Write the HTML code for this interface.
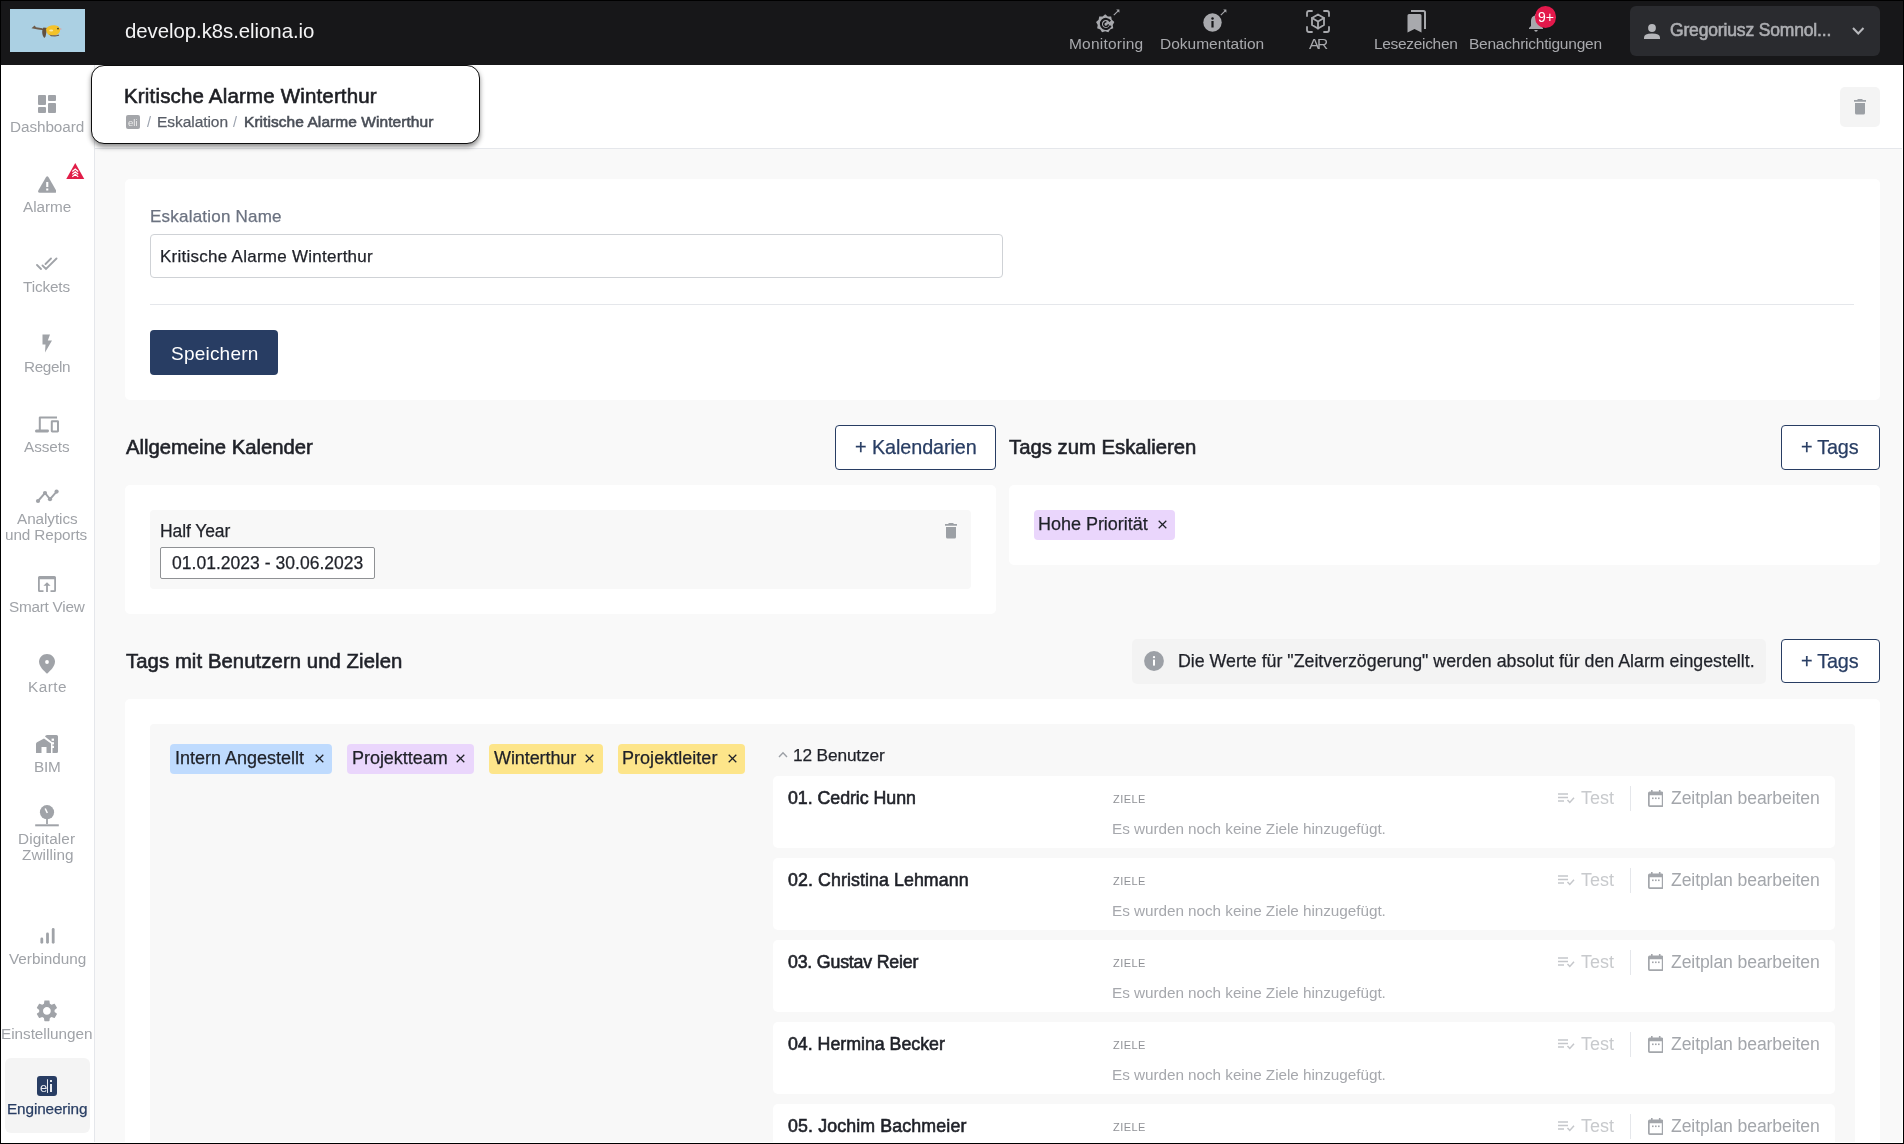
<!DOCTYPE html>
<html><head><meta charset="utf-8"><title>Eskalation</title>
<style>
html,body{margin:0;padding:0;width:1904px;height:1144px;overflow:hidden;background:#fff;}
body{position:relative;font-family:"Liberation Sans", sans-serif;}
svg{display:block}
</style></head><body>
<div style="position:absolute;left:0px;top:0px;width:1904px;height:65px;background:#171719"></div><div style="position:absolute;left:1px;top:65px;width:93px;height:1078px;background:#fff"></div><div style="position:absolute;left:94px;top:65px;width:1px;height:1078px;background:#e5e7eb"></div><div style="position:absolute;left:95px;top:65px;width:1807px;height:83px;background:#fff"></div><div style="position:absolute;left:95px;top:148px;width:1807px;height:1px;background:#e5e7eb"></div><div style="position:absolute;left:95px;top:149px;width:1807px;height:993px;background:#f9f9f9"></div><div style="position:absolute;left:10px;top:9px;width:75px;height:43px;background:#abd0e3"></div><svg style="position:absolute;left:30px;top:23px" width="34" height="17" viewBox="0 0 34 17">
<path d="M1.5 5.2 L4.6 2.6 L6 4.2 L12.5 5.2 L13.5 7.2 L8 6.6 Z" fill="#6e5b4a"/>
<path d="M13.5 4.6 C11.8 7 11.6 11.5 14.2 15 L15.6 13.6 C16.2 10 16.8 7 17.5 5 Z" fill="#62503f"/>
<path d="M16 6 C17 3.4 20.5 2 24.5 2.2 C28.2 2.4 30.2 4.6 30 7.4 C29.6 10.6 26.5 12.6 22 12.6 C18.4 12.6 16.4 10.4 16 6 Z" fill="#f3c22a"/>
<path d="M18.5 10.8 C20.5 12.6 25.5 12.8 28.6 11.4 L29.2 12.8 L25 13.4 L21 13.2 Z" fill="#6e5b4a"/>
<ellipse cx="21.2" cy="7.4" rx="2" ry="1" fill="#f9e7a6"/>
<circle cx="28" cy="5.6" r="0.9" fill="#3b3520"/>
<path d="M30 5.2 L32 6 L30.2 6.8 Z" fill="#e79a8e"/>
</svg><div style="position:absolute;left:125.00px;top:20.00px;font-size:20.4px;line-height:normal;will-change:transform;font-weight:400;color:#f4f4f5;letter-spacing:-0.055px;white-space:nowrap;">develop.k8s.eliona.io</div><div style="position:absolute;left:1069.40px;top:35.00px;font-size:15.5px;line-height:normal;will-change:transform;font-weight:400;color:#a8a9ad;letter-spacing:0.206px;white-space:nowrap;">Monitoring</div><div style="position:absolute;left:1160.00px;top:35.00px;font-size:15.5px;line-height:normal;will-change:transform;font-weight:400;color:#a8a9ad;letter-spacing:-0.003px;white-space:nowrap;">Dokumentation</div><div style="position:absolute;left:1309.00px;top:35.00px;font-size:15.5px;line-height:normal;will-change:transform;font-weight:400;color:#a8a9ad;letter-spacing:-2.438px;white-space:nowrap;">AR</div><div style="position:absolute;left:1373.60px;top:35.00px;font-size:15.5px;line-height:normal;will-change:transform;font-weight:400;color:#a8a9ad;letter-spacing:-0.322px;white-space:nowrap;">Lesezeichen</div><div style="position:absolute;left:1469.00px;top:35.00px;font-size:15.5px;line-height:normal;will-change:transform;font-weight:400;color:#a8a9ad;letter-spacing:-0.235px;white-space:nowrap;">Benachrichtigungen</div><svg style="position:absolute;left:1095.5px;top:12.5px" width="20" height="21" viewBox="0 0 20 21">
<path fill="#a8a9ad" d="M9.20 1.30 L11.80 3.46 L15.18 3.48 L15.78 6.80 L18.36 8.99 L16.68 11.92 L17.25 15.25 L14.09 16.42 L12.38 19.34 L9.20 18.20 L6.02 19.34 L4.31 16.42 L1.15 15.25 L1.72 11.92 L0.04 8.99 L2.62 6.80 L3.22 3.48 L6.60 3.46 Z"/>
<path fill="none" stroke="#171719" stroke-width="2.1" d="M14.2 8.4 A5 5 0 1 0 14.6 12.6"/>
<path fill="none" stroke="#171719" stroke-width="1.5" d="M12.3 11.2 A2.3 2.3 0 1 1 10.4 8.9"/>
</svg><svg style="position:absolute;left:1113px;top:9px" width="7" height="7" viewBox="0 0 7 7"><path d="M0.8 6.2 L5.2 1.8" stroke="#a8a9ad" stroke-width="1.1" fill="none"/><path d="M3.2 0.6 H6.4 V3.8 Z" fill="#a8a9ad"/></svg><svg style="position:absolute;left:1220px;top:9px" width="7" height="7" viewBox="0 0 7 7"><path d="M0.8 6.2 L5.2 1.8" stroke="#a8a9ad" stroke-width="1.1" fill="none"/><path d="M3.2 0.6 H6.4 V3.8 Z" fill="#a8a9ad"/></svg><svg style="position:absolute;left:1203px;top:12.5px" width="19" height="19" viewBox="0 0 19 19">
<circle cx="9.5" cy="9.5" r="9.2" fill="#a8a9ad"/><rect x="8.4" y="8" width="2.2" height="6.5" fill="#171719"/><circle cx="9.5" cy="5.5" r="1.25" fill="#171719"/></svg><svg style="position:absolute;left:1306px;top:9.5px" width="24" height="23" viewBox="0 0 24 23">
<g fill="none" stroke="#a8a9ad" stroke-width="1.8" stroke-linecap="round">
<path d="M1 6 V3 Q1 1 3 1 H6"/><path d="M18 1 H21 Q23 1 23 3 V6"/><path d="M23 17 V20 Q23 22 21 22 H18"/><path d="M6 22 H3 Q1 22 1 20 V17"/>
<path d="M12 4.5 L18 8 V15 L12 18.5 L6 15 V8 Z" stroke-linejoin="round"/><path d="M6 8 L12 11.5 L18 8 M12 11.5 V18.5" stroke-linejoin="round"/>
</g></svg><svg style="position:absolute;left:1406.5px;top:9.5px" width="19" height="23" viewBox="0 0 19 23">
<path fill="#a8a9ad" d="M0.5 5.5 Q0.5 4 2 4 H13 Q14.5 4 14.5 5.5 V22.5 L7.5 19 L0.5 22.5 Z"/>
<path fill="none" stroke="#a8a9ad" stroke-width="2" d="M4 1 H16.5 Q18 1 18 2.5 V19"/></svg><svg style="position:absolute;left:1527px;top:13px" width="20" height="19" viewBox="0 0 20 19">
<path fill="#a8a9ad" d="M9 1 Q10 1 10 2 V2.6 Q14 3.6 14 8 V13 L16 15 V16 H2 V15 L4 13 V8 Q4 3.6 8 2.6 V2 Q8 1 9 1Z"/><path fill="#a8a9ad" d="M7.2 17 H10.8 Q10.5 18.8 9 18.8 Q7.5 18.8 7.2 17Z"/></svg><div style="position:absolute;left:1535px;top:6.3px;width:21.4px;height:21.4px;background:#e3194b;border-radius:50%"></div><div style="position:absolute;left:1537.81px;top:9.00px;font-size:14px;line-height:normal;will-change:transform;font-weight:400;color:#ffffff;letter-spacing:0.000px;white-space:nowrap;">9+</div><div style="position:absolute;left:1630px;top:6px;width:250px;height:49.5px;background:#2a2b2f;border-radius:6px"></div><svg style="position:absolute;left:1644px;top:23.5px" width="16" height="15.5" viewBox="0 0 16 15.5">
<circle cx="8" cy="4" r="3.9" fill="#b5b6ba"/><path fill="#b5b6ba" d="M0 13.5 Q0 9.5 8 9.5 Q16 9.5 16 13.5 V15.5 H0Z"/></svg><div style="position:absolute;left:1669.50px;top:20.00px;font-size:17.5px;line-height:normal;will-change:transform;font-weight:400;-webkit-text-stroke:0.6px #adaeb2;color:#adaeb2;letter-spacing:-0.158px;white-space:nowrap;">Gregoriusz Somnol...</div><svg style="position:absolute;left:1852px;top:26.5px" width="12.5" height="8" viewBox="0 0 12.5 8"><path d="M1 1 L6.25 6.5 L11.5 1" stroke="#b8b9bd" stroke-width="2" fill="none"/></svg><div style="position:absolute;left:9.85px;top:118.00px;font-size:15.3px;line-height:normal;will-change:transform;font-weight:400;color:#a0a3a8;letter-spacing:-0.078px;white-space:nowrap;">Dashboard</div><div style="position:absolute;left:23.30px;top:198.00px;font-size:15.3px;line-height:normal;will-change:transform;font-weight:400;color:#a0a3a8;letter-spacing:-0.029px;white-space:nowrap;">Alarme</div><div style="position:absolute;left:23.45px;top:278.00px;font-size:15.3px;line-height:normal;will-change:transform;font-weight:400;color:#a0a3a8;letter-spacing:-0.121px;white-space:nowrap;">Tickets</div><div style="position:absolute;left:23.70px;top:358.00px;font-size:15.3px;line-height:normal;will-change:transform;font-weight:400;color:#a0a3a8;letter-spacing:-0.394px;white-space:nowrap;">Regeln</div><div style="position:absolute;left:24.20px;top:438.00px;font-size:15.3px;line-height:normal;will-change:transform;font-weight:400;color:#a0a3a8;letter-spacing:-0.051px;white-space:nowrap;">Assets</div><div style="position:absolute;left:16.70px;top:510.00px;font-size:15.3px;line-height:normal;will-change:transform;font-weight:400;color:#a0a3a8;letter-spacing:-0.070px;white-space:nowrap;">Analytics</div><div style="position:absolute;left:5.40px;top:526.00px;font-size:15.3px;line-height:normal;will-change:transform;font-weight:400;color:#a0a3a8;letter-spacing:-0.109px;white-space:nowrap;">und Reports</div><div style="position:absolute;left:8.85px;top:598.00px;font-size:15.3px;line-height:normal;will-change:transform;font-weight:400;color:#a0a3a8;letter-spacing:-0.242px;white-space:nowrap;">Smart View</div><div style="position:absolute;left:27.70px;top:678.00px;font-size:15.3px;line-height:normal;will-change:transform;font-weight:400;color:#a0a3a8;letter-spacing:0.486px;white-space:nowrap;">Karte</div><div style="position:absolute;left:33.70px;top:758.00px;font-size:15.3px;line-height:normal;will-change:transform;font-weight:400;color:#a0a3a8;letter-spacing:-0.226px;white-space:nowrap;">BIM</div><div style="position:absolute;left:18.20px;top:830.00px;font-size:15.3px;line-height:normal;will-change:transform;font-weight:400;color:#a0a3a8;letter-spacing:0.123px;white-space:nowrap;">Digitaler</div><div style="position:absolute;left:21.70px;top:846.00px;font-size:15.3px;line-height:normal;will-change:transform;font-weight:400;color:#a0a3a8;letter-spacing:0.073px;white-space:nowrap;">Zwilling</div><div style="position:absolute;left:8.85px;top:950.00px;font-size:15.3px;line-height:normal;will-change:transform;font-weight:400;color:#a0a3a8;letter-spacing:-0.022px;white-space:nowrap;">Verbindung</div><div style="position:absolute;left:1.20px;top:1025.00px;font-size:15.3px;line-height:normal;will-change:transform;font-weight:400;color:#a0a3a8;letter-spacing:-0.028px;white-space:nowrap;">Einstellungen</div><div style="position:absolute;left:5px;top:1058px;width:85px;height:75px;background:#f4f4f4;border-radius:6px"></div><div style="position:absolute;left:6.70px;top:1100.00px;font-size:15.3px;line-height:normal;will-change:transform;font-weight:400;-webkit-text-stroke:0.25px #283d63;color:#283d63;letter-spacing:-0.114px;white-space:nowrap;">Engineering</div><svg style="position:absolute;left:38px;top:95px" width="18" height="18" viewBox="0 0 18 18" fill="#a0a3a8">
<rect x="0" y="0" width="8" height="10" rx="1"/><rect x="0" y="12" width="8" height="6" rx="1"/><rect x="10" y="0" width="8" height="6" rx="1"/><rect x="10" y="8" width="8" height="10" rx="1"/></svg><svg style="position:absolute;left:37.8px;top:176px" width="18.5" height="17" viewBox="0 0 18.5 17">
<path fill="#a0a3a8" d="M8.1 1 Q9.25 -0.6 10.4 1 L18.2 14.6 Q18.9 16.8 16.8 16.8 H1.7 Q-0.4 16.8 0.3 14.6 Z"/><rect x="8.2" y="6" width="2.1" height="5" fill="#fff"/><rect x="8.2" y="12.5" width="2.1" height="2" fill="#fff"/></svg><svg style="position:absolute;left:66px;top:162.8px" width="18.5" height="16.5" viewBox="0 0 18.5 16.5">
<path fill="#e11d48" d="M9.25 0 L18.5 16.5 H0 Z"/><path d="M6.3 8.5 L9.25 6 L12.2 8.5 M6.3 11.2 L9.25 8.7 L12.2 11.2 M6.3 13.9 L9.25 11.4 L12.2 13.9" stroke="#fff" stroke-width="1.2" fill="none"/></svg><svg style="position:absolute;left:36px;top:257px" width="22" height="14" viewBox="0 0 22 14">
<path d="M1 8 L5 12 M6.5 8.5 L10 12 L20.5 1.5 M9.5 7 L15 1.5" stroke="#a0a3a8" stroke-width="1.8" fill="none" stroke-linecap="round"/></svg><svg style="position:absolute;left:41px;top:334px" width="12" height="19" viewBox="0 0 12 19">
<path fill="#a0a3a8" d="M1.5 0.5 H9 L6.8 6.5 H11 L4 18.5 L4.5 10.5 H1.5 Z"/></svg><svg style="position:absolute;left:35px;top:415.5px" width="24" height="17" viewBox="0 0 24 17">
<path fill="#a0a3a8" d="M3.8 1.6 Q3.8 0.4 5 0.4 H22 V2.4 H5.8 V13.4 H12.6 Q14 13.4 14 14.8 Q14 16.4 12.6 16.4 H1.4 Q0 16.4 0 14.9 Q0 13.4 1.4 13.4 H3.8 Z"/>
<path fill="#a0a3a8" d="M17.2 4.2 H22.6 Q24 4.2 24 5.6 V15 Q24 16.4 22.6 16.4 H17.2 Q15.8 16.4 15.8 15 V5.6 Q15.8 4.2 17.2 4.2 Z M17.8 6.2 V14.4 H22 V6.2 Z"/></svg><svg style="position:absolute;left:35px;top:489px" width="24" height="15" viewBox="0 0 24 15">
<path d="M3 12 L10 4 L15 10.2 L21.6 2.6" stroke="#a0a3a8" stroke-width="1.9" fill="none"/>
<circle cx="3" cy="12" r="2.1" fill="#a0a3a8"/><circle cx="10" cy="4" r="2.1" fill="#a0a3a8"/><circle cx="15" cy="10.2" r="2.1" fill="#a0a3a8"/><circle cx="21.6" cy="2.6" r="2.1" fill="#a0a3a8"/></svg><svg style="position:absolute;left:38px;top:576px" width="18" height="16" viewBox="0 0 18 16">
<path fill="#a0a3a8" d="M1.5 0 H16.5 Q18 0 18 1.5 V14.5 Q18 16 16.5 16 H12.5 V14.2 H16.2 V3.2 H1.8 V14.2 H5.5 V16 H1.5 Q0 16 0 14.5 V1.5 Q0 0 1.5 0Z"/>
<path fill="#a0a3a8" d="M9 6.2 L12.6 9.8 H9.9 V16 H8.1 V9.8 H5.4 Z"/></svg><svg style="position:absolute;left:39px;top:654px" width="16" height="20" viewBox="0 0 16 20">
<path fill="#a0a3a8" d="M8 0 C12.4 0 16 3.4 16 7.8 C16 12 11.6 16.6 8 19.8 C4.4 16.6 0 12 0 7.8 C0 3.4 3.6 0 8 0Z"/><circle cx="8" cy="8" r="1.9" fill="#fff"/></svg><svg style="position:absolute;left:36px;top:735px" width="22" height="18" viewBox="0 0 22 18">
<path fill="#a0a3a8" d="M8 3.5 L15 8.5 V18 H10.5 V12 H5.5 V18 H0 V9 Q0 8 1 7.3 Z"/>
<path fill="#a0a3a8" d="M9 1.5 Q9.5 0 11 0 H20.5 Q22 0 22 1.5 V16.5 Q22 18 20.5 18 H16.5 V7.5 Z"/>
<rect x="15.6" y="3.6" width="2.4" height="2.2" fill="#fff"/><rect x="15.6" y="7.2" width="2.4" height="2.2" fill="#fff"/><rect x="15.6" y="10.8" width="2.4" height="2.2" fill="#fff"/></svg><svg style="position:absolute;left:35px;top:805px" width="24" height="22" viewBox="0 0 24 22">
<circle cx="12" cy="7.2" r="7.1" fill="#a0a3a8"/><path d="M10.2 3.5 L12.3 8" stroke="#fff" stroke-width="1.5"/>
<rect x="11.1" y="14" width="1.8" height="5" fill="#a0a3a8"/><rect x="0.2" y="19.3" width="23.6" height="2" fill="#a0a3a8"/></svg><svg style="position:absolute;left:40px;top:928px" width="15" height="16" viewBox="0 0 15 16">
<g stroke="#a0a3a8" stroke-width="2.8" stroke-linecap="round"><path d="M1.8 11 V14.3"/><path d="M7.5 6 V14.3"/><path d="M13.2 1.5 V14.3"/></g></svg><svg style="position:absolute;left:34.3px;top:998.4px" width="25.8" height="25.8" viewBox="0 0 24 24">
<path fill="#a0a3a8" d="M19.14 12.94c.04-.3.06-.61.06-.94 0-.32-.02-.64-.07-.94l2.03-1.58c.18-.14.23-.41.12-.61l-1.92-3.32c-.12-.22-.37-.29-.59-.22l-2.39.96c-.5-.38-1.03-.7-1.62-.94l-.36-2.54c-.04-.24-.24-.41-.48-.41h-3.84c-.24 0-.43.17-.47.41l-.36 2.54c-.59.24-1.13.57-1.62.94l-2.39-.96c-.22-.08-.47 0-.59.22L2.74 8.87c-.12.21-.08.47.12.61l2.03 1.58c-.05.3-.09.63-.09.94s.02.64.07.94l-2.03 1.58c-.18.14-.23.41-.12.61l1.92 3.32c.12.22.37.29.59.22l2.39-.96c.5.38 1.03.7 1.62.94l.36 2.54c.05.24.24.41.48.41h3.84c.24 0 .44-.17.47-.41l.36-2.54c.59-.24 1.13-.56 1.62-.94l2.39.96c.22.08.47 0 .59-.22l1.92-3.32c.12-.22.07-.47-.12-.61l-2.01-1.58zM12 15.6c-1.98 0-3.6-1.62-3.6-3.6s1.62-3.6 3.6-3.6 3.6 1.62 3.6 3.6-1.62 3.6-3.6 3.6z"/></svg><div style="position:absolute;left:37px;top:1075.7px;width:20px;height:20.3px;background:#283d63;border-radius:3px"></div><div style="position:absolute;left:40.00px;top:1080.00px;font-size:13px;line-height:normal;will-change:transform;font-weight:400;color:#e8ebf0;letter-spacing:0.000px;white-space:nowrap;">e</div><div style="position:absolute;left:47.2px;top:1079px;width:1.3px;height:14px;background:#e8ebf0;border-radius:1px"></div><div style="position:absolute;left:50px;top:1080px;width:1.6px;height:1.6px;background:#e8ebf0"></div><div style="position:absolute;left:50px;top:1083.5px;width:1.6px;height:8px;background:#e8ebf0"></div><div style="position:absolute;left:91px;top:64.5px;width:389px;height:79px;box-sizing:border-box;background:#fff;border:1.6px solid #0d0d0d;border-radius:13px;box-shadow:0 3px 5px rgba(0,0,0,0.45)"></div><div style="position:absolute;left:124.30px;top:84.00px;font-size:20.5px;line-height:normal;will-change:transform;font-weight:400;-webkit-text-stroke:0.6px #1d1e23;color:#1d1e23;letter-spacing:0.167px;white-space:nowrap;">Kritische Alarme Winterthur</div><div style="position:absolute;left:126px;top:115px;width:14px;height:14px;background:#a4a6aa;border-radius:2px"></div><div style="position:absolute;left:128.30px;top:117.00px;font-size:9.5px;line-height:normal;will-change:transform;font-weight:400;color:#eeeeee;letter-spacing:0.000px;white-space:nowrap;">eli</div><div style="position:absolute;left:147.00px;top:114.00px;font-size:14.5px;line-height:normal;will-change:transform;font-weight:400;color:#9ca3af;letter-spacing:0.000px;white-space:nowrap;">/</div><div style="position:absolute;left:156.60px;top:113.00px;font-size:15.5px;line-height:normal;will-change:transform;font-weight:400;-webkit-text-stroke:0.25px #585d66;color:#585d66;letter-spacing:-0.055px;white-space:nowrap;">Eskalation</div><div style="position:absolute;left:233.00px;top:114.00px;font-size:14.5px;line-height:normal;will-change:transform;font-weight:400;color:#9ca3af;letter-spacing:0.000px;white-space:nowrap;">/</div><div style="position:absolute;left:244.00px;top:113.00px;font-size:15.5px;line-height:normal;will-change:transform;font-weight:400;-webkit-text-stroke:0.6px #4a4f58;color:#4a4f58;letter-spacing:0.059px;white-space:nowrap;">Kritische Alarme Winterthur</div><div style="position:absolute;left:1840px;top:87px;width:40px;height:40px;background:#f4f4f4;border-radius:5px"></div><svg style="position:absolute;left:1854px;top:99px" width="12" height="16" viewBox="0 0 12 16"><path fill="#9ca0a5" d="M4 0 H8 L9 1 H12 V2.8 H0 V1 H3 Z"/><path fill="#9ca0a5" d="M1 4 H11 V14 Q11 15.5 9.5 15.5 H2.5 Q1 15.5 1 14 Z"/></svg><div style="position:absolute;left:125px;top:179px;width:1755px;height:221px;background:#fff;border-radius:5px"></div><div style="position:absolute;left:149.70px;top:207.00px;font-size:17px;line-height:normal;will-change:transform;font-weight:400;-webkit-text-stroke:0.25px #6b7280;color:#6b7280;letter-spacing:0.211px;white-space:nowrap;">Eskalation Name</div><div style="position:absolute;left:150px;top:234px;width:853px;height:44px;background:#fff;border:1px solid #cfd2d6;border-radius:4px;box-sizing:border-box"></div><div style="position:absolute;left:159.60px;top:247.00px;font-size:17px;line-height:normal;will-change:transform;font-weight:400;-webkit-text-stroke:0.25px #1f2128;color:#1f2128;letter-spacing:0.260px;white-space:nowrap;">Kritische Alarme Winterthur</div><div style="position:absolute;left:150px;top:304px;width:1704px;height:1px;background:#e5e7eb"></div><div style="position:absolute;left:150px;top:330px;width:128px;height:45px;background:#283d63;border-radius:4px"></div><div style="position:absolute;left:170.70px;top:343.00px;font-size:19px;line-height:normal;will-change:transform;font-weight:400;color:#ffffff;letter-spacing:0.214px;white-space:nowrap;">Speichern</div><div style="position:absolute;left:125.50px;top:436.00px;font-size:20.3px;line-height:normal;will-change:transform;font-weight:400;-webkit-text-stroke:0.6px #1f2128;color:#1f2128;letter-spacing:-0.022px;white-space:nowrap;">Allgemeine Kalender</div><div style="position:absolute;left:835px;top:425px;width:161px;height:45px;background:#fff;border:1px solid #283d63;border-radius:4px;box-sizing:border-box"></div><div style="position:absolute;left:854.70px;top:436.00px;font-size:19.8px;line-height:normal;will-change:transform;font-weight:400;-webkit-text-stroke:0.25px #283d63;color:#283d63;letter-spacing:-0.069px;white-space:nowrap;">+ Kalendarien</div><div style="position:absolute;left:125px;top:485px;width:871px;height:129px;background:#fff;border-radius:5px"></div><div style="position:absolute;left:150px;top:510px;width:821px;height:79px;background:#f8f8f8;border-radius:4px"></div><div style="position:absolute;left:159.70px;top:521.00px;font-size:17.5px;line-height:normal;will-change:transform;font-weight:400;-webkit-text-stroke:0.25px #1f2128;color:#1f2128;letter-spacing:-0.089px;white-space:nowrap;">Half Year</div><div style="position:absolute;left:160px;top:547px;width:215px;height:32px;background:#fff;border:1px solid #8f9194;border-radius:2px;box-sizing:border-box"></div><div style="position:absolute;left:171.80px;top:553.00px;font-size:17.5px;line-height:normal;will-change:transform;font-weight:400;-webkit-text-stroke:0.25px #1f2128;color:#1f2128;letter-spacing:0.028px;white-space:nowrap;">01.01.2023 - 30.06.2023</div><svg style="position:absolute;left:945px;top:523px" width="12" height="16" viewBox="0 0 12 16"><path fill="#9ca0a5" d="M4 0 H8 L9 1 H12 V2.8 H0 V1 H3 Z"/><path fill="#9ca0a5" d="M1 4 H11 V14 Q11 15.5 9.5 15.5 H2.5 Q1 15.5 1 14 Z"/></svg><div style="position:absolute;left:1009.00px;top:436.00px;font-size:20.3px;line-height:normal;will-change:transform;font-weight:400;-webkit-text-stroke:0.6px #1f2128;color:#1f2128;letter-spacing:0.009px;white-space:nowrap;">Tags zum Eskalieren</div><div style="position:absolute;left:1781px;top:425px;width:99px;height:45px;background:#fff;border:1px solid #283d63;border-radius:4px;box-sizing:border-box"></div><div style="position:absolute;left:1800.90px;top:436.00px;font-size:19.8px;line-height:normal;will-change:transform;font-weight:400;-webkit-text-stroke:0.25px #283d63;color:#283d63;letter-spacing:-0.188px;white-space:nowrap;">+ Tags</div><div style="position:absolute;left:1009px;top:485px;width:871px;height:80px;background:#fff;border-radius:5px"></div><div style="position:absolute;left:1034px;top:510px;width:141px;height:30px;background:#ead6fc;border-radius:4px"></div><div style="position:absolute;left:1038.40px;top:514.00px;font-size:18px;line-height:normal;will-change:transform;font-weight:400;-webkit-text-stroke:0.25px #1f2128;color:#1f2128;letter-spacing:-0.027px;white-space:nowrap;">Hohe Priorität</div><svg style="position:absolute;left:1157.5px;top:520px" width="9" height="9" viewBox="0 0 9 9"><path d="M0.7 0.7 L8.3 8.3 M8.3 0.7 L0.7 8.3" stroke="#1f2128" stroke-width="1.25"/></svg><div style="position:absolute;left:125.50px;top:650.00px;font-size:20.3px;line-height:normal;will-change:transform;font-weight:400;-webkit-text-stroke:0.6px #1f2128;color:#1f2128;letter-spacing:0.083px;white-space:nowrap;">Tags mit Benutzern und Zielen</div><div style="position:absolute;left:1132px;top:639px;width:634px;height:45px;background:#f3f3f3;border-radius:5px"></div><svg style="position:absolute;left:1144px;top:651px" width="20" height="20" viewBox="0 0 20 20"><circle cx="10" cy="10" r="9.9" fill="#9ca0a6"/><rect x="9" y="8.6" width="2" height="6" fill="#fff"/><circle cx="10" cy="6.2" r="1.15" fill="#fff"/></svg><div style="position:absolute;left:1178.00px;top:651.00px;font-size:17.8px;line-height:normal;will-change:transform;font-weight:400;-webkit-text-stroke:0.25px #1f2128;color:#1f2128;letter-spacing:-0.001px;white-space:nowrap;">Die Werte für &quot;Zeitverzögerung&quot; werden absolut für den Alarm eingestellt.</div><div style="position:absolute;left:1781px;top:639px;width:99px;height:44px;background:#fff;border:1px solid #283d63;border-radius:4px;box-sizing:border-box"></div><div style="position:absolute;left:1800.90px;top:650.00px;font-size:19.8px;line-height:normal;will-change:transform;font-weight:400;-webkit-text-stroke:0.25px #283d63;color:#283d63;letter-spacing:-0.188px;white-space:nowrap;">+ Tags</div><div style="position:absolute;left:125px;top:699px;width:1755px;height:500px;background:#fff;border-radius:5px"></div><div style="position:absolute;left:150px;top:724px;width:1705px;height:500px;background:#f8f8f8;border-radius:4px"></div><div style="position:absolute;left:170px;top:744px;width:162px;height:30px;background:#bfdbfe;border-radius:4px"></div><div style="position:absolute;left:174.70px;top:748.00px;font-size:18px;line-height:normal;will-change:transform;font-weight:400;-webkit-text-stroke:0.25px #1f2128;color:#1f2128;letter-spacing:-0.005px;white-space:nowrap;">Intern Angestellt</div><svg style="position:absolute;left:314.6px;top:754px" width="9" height="9" viewBox="0 0 9 9"><path d="M0.7 0.7 L8.3 8.3 M8.3 0.7 L0.7 8.3" stroke="#1f2128" stroke-width="1.25"/></svg><div style="position:absolute;left:347px;top:744px;width:127px;height:30px;background:#ead6fc;border-radius:4px"></div><div style="position:absolute;left:351.50px;top:748.00px;font-size:18px;line-height:normal;will-change:transform;font-weight:400;-webkit-text-stroke:0.25px #1f2128;color:#1f2128;letter-spacing:-0.034px;white-space:nowrap;">Projektteam</div><svg style="position:absolute;left:456.4px;top:754px" width="9" height="9" viewBox="0 0 9 9"><path d="M0.7 0.7 L8.3 8.3 M8.3 0.7 L0.7 8.3" stroke="#1f2128" stroke-width="1.25"/></svg><div style="position:absolute;left:489px;top:744px;width:114px;height:30px;background:#fde58a;border-radius:4px"></div><div style="position:absolute;left:494.30px;top:748.00px;font-size:18px;line-height:normal;will-change:transform;font-weight:400;-webkit-text-stroke:0.25px #1f2128;color:#1f2128;letter-spacing:-0.081px;white-space:nowrap;">Winterthur</div><svg style="position:absolute;left:585.4px;top:754px" width="9" height="9" viewBox="0 0 9 9"><path d="M0.7 0.7 L8.3 8.3 M8.3 0.7 L0.7 8.3" stroke="#1f2128" stroke-width="1.25"/></svg><div style="position:absolute;left:618px;top:744px;width:127px;height:30px;background:#fde58a;border-radius:4px"></div><div style="position:absolute;left:622.40px;top:748.00px;font-size:18px;line-height:normal;will-change:transform;font-weight:400;-webkit-text-stroke:0.25px #1f2128;color:#1f2128;letter-spacing:0.030px;white-space:nowrap;">Projektleiter</div><svg style="position:absolute;left:727.5px;top:754px" width="9" height="9" viewBox="0 0 9 9"><path d="M0.7 0.7 L8.3 8.3 M8.3 0.7 L0.7 8.3" stroke="#1f2128" stroke-width="1.25"/></svg><svg style="position:absolute;left:778px;top:751px" width="10" height="7" viewBox="0 0 10 7"><path d="M1 6 L5 1.8 L9 6" stroke="#9ca0a6" stroke-width="1.4" fill="none"/></svg><div style="position:absolute;left:792.70px;top:745.00px;font-size:17.3px;line-height:normal;will-change:transform;font-weight:400;-webkit-text-stroke:0.25px #1f2128;color:#1f2128;letter-spacing:-0.144px;white-space:nowrap;">12 Benutzer</div><div style="position:absolute;left:773px;top:776px;width:1062px;height:72px;background:#fff;border-radius:5px"></div><div style="position:absolute;left:787.70px;top:788.00px;font-size:17.8px;line-height:normal;will-change:transform;font-weight:400;-webkit-text-stroke:0.6px #1f2128;color:#1f2128;letter-spacing:-0.043px;white-space:nowrap;">01. Cedric Hunn</div><div style="position:absolute;left:1112.70px;top:793.00px;font-size:11px;line-height:normal;will-change:transform;font-weight:400;color:#909297;letter-spacing:0.443px;white-space:nowrap;">ZIELE</div><div style="position:absolute;left:1111.70px;top:820.00px;font-size:15.3px;line-height:normal;will-change:transform;font-weight:400;color:#a6a8ad;letter-spacing:-0.044px;white-space:nowrap;">Es wurden noch keine Ziele hinzugefügt.</div><svg style="position:absolute;left:1558px;top:792.5px" width="17" height="11" viewBox="0 0 17 11"><g stroke="#c5c7cb" stroke-width="1.5" fill="none"><path d="M0 1 H10 M0 4.5 H10 M0 8 H6"/><path d="M9.5 7 L11.8 9.5 L16 4.8"/></g></svg><div style="position:absolute;left:1581.00px;top:788.00px;font-size:18px;line-height:normal;will-change:transform;font-weight:400;color:#c8cacd;letter-spacing:-0.004px;white-space:nowrap;">Test</div><div style="position:absolute;left:1629.5px;top:786px;width:1px;height:25px;background:#e5e7eb"></div><svg style="position:absolute;left:1647.5px;top:789.5px" width="15.5" height="17" viewBox="0 0 15.5 17"><path fill="#a3a6ab" d="M3 0 H4.6 V1.6 H10.9 V0 H12.5 V1.6 H13.8 Q15.5 1.6 15.5 3.3 V15.3 Q15.5 17 13.8 17 H1.7 Q0 17 0 15.3 V3.3 Q0 1.6 1.7 1.6 H3 Z M1.7 5.2 V15.3 H13.8 V5.2 Z"/><rect x="4" y="7.5" width="1.6" height="1.6" fill="#a3a6ab"/><rect x="7" y="7.5" width="1.6" height="1.6" fill="#a3a6ab"/><rect x="10" y="7.5" width="1.6" height="1.6" fill="#a3a6ab"/></svg><div style="position:absolute;left:1670.80px;top:788.00px;font-size:17.6px;line-height:normal;will-change:transform;font-weight:400;color:#a3a6ab;letter-spacing:-0.102px;white-space:nowrap;">Zeitplan bearbeiten</div><div style="position:absolute;left:773px;top:858px;width:1062px;height:72px;background:#fff;border-radius:5px"></div><div style="position:absolute;left:787.70px;top:870.00px;font-size:17.8px;line-height:normal;will-change:transform;font-weight:400;-webkit-text-stroke:0.6px #1f2128;color:#1f2128;letter-spacing:0.084px;white-space:nowrap;">02. Christina Lehmann</div><div style="position:absolute;left:1112.70px;top:875.00px;font-size:11px;line-height:normal;will-change:transform;font-weight:400;color:#909297;letter-spacing:0.443px;white-space:nowrap;">ZIELE</div><div style="position:absolute;left:1111.70px;top:902.00px;font-size:15.3px;line-height:normal;will-change:transform;font-weight:400;color:#a6a8ad;letter-spacing:-0.044px;white-space:nowrap;">Es wurden noch keine Ziele hinzugefügt.</div><svg style="position:absolute;left:1558px;top:874.5px" width="17" height="11" viewBox="0 0 17 11"><g stroke="#c5c7cb" stroke-width="1.5" fill="none"><path d="M0 1 H10 M0 4.5 H10 M0 8 H6"/><path d="M9.5 7 L11.8 9.5 L16 4.8"/></g></svg><div style="position:absolute;left:1581.00px;top:870.00px;font-size:18px;line-height:normal;will-change:transform;font-weight:400;color:#c8cacd;letter-spacing:-0.004px;white-space:nowrap;">Test</div><div style="position:absolute;left:1629.5px;top:868px;width:1px;height:25px;background:#e5e7eb"></div><svg style="position:absolute;left:1647.5px;top:871.5px" width="15.5" height="17" viewBox="0 0 15.5 17"><path fill="#a3a6ab" d="M3 0 H4.6 V1.6 H10.9 V0 H12.5 V1.6 H13.8 Q15.5 1.6 15.5 3.3 V15.3 Q15.5 17 13.8 17 H1.7 Q0 17 0 15.3 V3.3 Q0 1.6 1.7 1.6 H3 Z M1.7 5.2 V15.3 H13.8 V5.2 Z"/><rect x="4" y="7.5" width="1.6" height="1.6" fill="#a3a6ab"/><rect x="7" y="7.5" width="1.6" height="1.6" fill="#a3a6ab"/><rect x="10" y="7.5" width="1.6" height="1.6" fill="#a3a6ab"/></svg><div style="position:absolute;left:1670.80px;top:870.00px;font-size:17.6px;line-height:normal;will-change:transform;font-weight:400;color:#a3a6ab;letter-spacing:-0.102px;white-space:nowrap;">Zeitplan bearbeiten</div><div style="position:absolute;left:773px;top:940px;width:1062px;height:72px;background:#fff;border-radius:5px"></div><div style="position:absolute;left:787.70px;top:952.00px;font-size:17.8px;line-height:normal;will-change:transform;font-weight:400;-webkit-text-stroke:0.6px #1f2128;color:#1f2128;letter-spacing:-0.207px;white-space:nowrap;">03. Gustav Reier</div><div style="position:absolute;left:1112.70px;top:957.00px;font-size:11px;line-height:normal;will-change:transform;font-weight:400;color:#909297;letter-spacing:0.443px;white-space:nowrap;">ZIELE</div><div style="position:absolute;left:1111.70px;top:984.00px;font-size:15.3px;line-height:normal;will-change:transform;font-weight:400;color:#a6a8ad;letter-spacing:-0.044px;white-space:nowrap;">Es wurden noch keine Ziele hinzugefügt.</div><svg style="position:absolute;left:1558px;top:956.5px" width="17" height="11" viewBox="0 0 17 11"><g stroke="#c5c7cb" stroke-width="1.5" fill="none"><path d="M0 1 H10 M0 4.5 H10 M0 8 H6"/><path d="M9.5 7 L11.8 9.5 L16 4.8"/></g></svg><div style="position:absolute;left:1581.00px;top:952.00px;font-size:18px;line-height:normal;will-change:transform;font-weight:400;color:#c8cacd;letter-spacing:-0.004px;white-space:nowrap;">Test</div><div style="position:absolute;left:1629.5px;top:950px;width:1px;height:25px;background:#e5e7eb"></div><svg style="position:absolute;left:1647.5px;top:953.5px" width="15.5" height="17" viewBox="0 0 15.5 17"><path fill="#a3a6ab" d="M3 0 H4.6 V1.6 H10.9 V0 H12.5 V1.6 H13.8 Q15.5 1.6 15.5 3.3 V15.3 Q15.5 17 13.8 17 H1.7 Q0 17 0 15.3 V3.3 Q0 1.6 1.7 1.6 H3 Z M1.7 5.2 V15.3 H13.8 V5.2 Z"/><rect x="4" y="7.5" width="1.6" height="1.6" fill="#a3a6ab"/><rect x="7" y="7.5" width="1.6" height="1.6" fill="#a3a6ab"/><rect x="10" y="7.5" width="1.6" height="1.6" fill="#a3a6ab"/></svg><div style="position:absolute;left:1670.80px;top:952.00px;font-size:17.6px;line-height:normal;will-change:transform;font-weight:400;color:#a3a6ab;letter-spacing:-0.102px;white-space:nowrap;">Zeitplan bearbeiten</div><div style="position:absolute;left:773px;top:1022px;width:1062px;height:72px;background:#fff;border-radius:5px"></div><div style="position:absolute;left:787.70px;top:1034.00px;font-size:17.8px;line-height:normal;will-change:transform;font-weight:400;-webkit-text-stroke:0.6px #1f2128;color:#1f2128;letter-spacing:-0.018px;white-space:nowrap;">04. Hermina Becker</div><div style="position:absolute;left:1112.70px;top:1039.00px;font-size:11px;line-height:normal;will-change:transform;font-weight:400;color:#909297;letter-spacing:0.443px;white-space:nowrap;">ZIELE</div><div style="position:absolute;left:1111.70px;top:1066.00px;font-size:15.3px;line-height:normal;will-change:transform;font-weight:400;color:#a6a8ad;letter-spacing:-0.044px;white-space:nowrap;">Es wurden noch keine Ziele hinzugefügt.</div><svg style="position:absolute;left:1558px;top:1038.5px" width="17" height="11" viewBox="0 0 17 11"><g stroke="#c5c7cb" stroke-width="1.5" fill="none"><path d="M0 1 H10 M0 4.5 H10 M0 8 H6"/><path d="M9.5 7 L11.8 9.5 L16 4.8"/></g></svg><div style="position:absolute;left:1581.00px;top:1034.00px;font-size:18px;line-height:normal;will-change:transform;font-weight:400;color:#c8cacd;letter-spacing:-0.004px;white-space:nowrap;">Test</div><div style="position:absolute;left:1629.5px;top:1032px;width:1px;height:25px;background:#e5e7eb"></div><svg style="position:absolute;left:1647.5px;top:1035.5px" width="15.5" height="17" viewBox="0 0 15.5 17"><path fill="#a3a6ab" d="M3 0 H4.6 V1.6 H10.9 V0 H12.5 V1.6 H13.8 Q15.5 1.6 15.5 3.3 V15.3 Q15.5 17 13.8 17 H1.7 Q0 17 0 15.3 V3.3 Q0 1.6 1.7 1.6 H3 Z M1.7 5.2 V15.3 H13.8 V5.2 Z"/><rect x="4" y="7.5" width="1.6" height="1.6" fill="#a3a6ab"/><rect x="7" y="7.5" width="1.6" height="1.6" fill="#a3a6ab"/><rect x="10" y="7.5" width="1.6" height="1.6" fill="#a3a6ab"/></svg><div style="position:absolute;left:1670.80px;top:1034.00px;font-size:17.6px;line-height:normal;will-change:transform;font-weight:400;color:#a3a6ab;letter-spacing:-0.102px;white-space:nowrap;">Zeitplan bearbeiten</div><div style="position:absolute;left:773px;top:1104px;width:1062px;height:72px;background:#fff;border-radius:5px"></div><div style="position:absolute;left:787.70px;top:1116.00px;font-size:17.8px;line-height:normal;will-change:transform;font-weight:400;-webkit-text-stroke:0.6px #1f2128;color:#1f2128;letter-spacing:0.127px;white-space:nowrap;">05. Jochim Bachmeier</div><div style="position:absolute;left:1112.70px;top:1121.00px;font-size:11px;line-height:normal;will-change:transform;font-weight:400;color:#909297;letter-spacing:0.443px;white-space:nowrap;">ZIELE</div><div style="position:absolute;left:1111.70px;top:1148.00px;font-size:15.3px;line-height:normal;will-change:transform;font-weight:400;color:#a6a8ad;letter-spacing:-0.044px;white-space:nowrap;">Es wurden noch keine Ziele hinzugefügt.</div><svg style="position:absolute;left:1558px;top:1120.5px" width="17" height="11" viewBox="0 0 17 11"><g stroke="#c5c7cb" stroke-width="1.5" fill="none"><path d="M0 1 H10 M0 4.5 H10 M0 8 H6"/><path d="M9.5 7 L11.8 9.5 L16 4.8"/></g></svg><div style="position:absolute;left:1581.00px;top:1116.00px;font-size:18px;line-height:normal;will-change:transform;font-weight:400;color:#c8cacd;letter-spacing:-0.004px;white-space:nowrap;">Test</div><div style="position:absolute;left:1629.5px;top:1114px;width:1px;height:25px;background:#e5e7eb"></div><svg style="position:absolute;left:1647.5px;top:1117.5px" width="15.5" height="17" viewBox="0 0 15.5 17"><path fill="#a3a6ab" d="M3 0 H4.6 V1.6 H10.9 V0 H12.5 V1.6 H13.8 Q15.5 1.6 15.5 3.3 V15.3 Q15.5 17 13.8 17 H1.7 Q0 17 0 15.3 V3.3 Q0 1.6 1.7 1.6 H3 Z M1.7 5.2 V15.3 H13.8 V5.2 Z"/><rect x="4" y="7.5" width="1.6" height="1.6" fill="#a3a6ab"/><rect x="7" y="7.5" width="1.6" height="1.6" fill="#a3a6ab"/><rect x="10" y="7.5" width="1.6" height="1.6" fill="#a3a6ab"/></svg><div style="position:absolute;left:1670.80px;top:1116.00px;font-size:17.6px;line-height:normal;will-change:transform;font-weight:400;color:#a3a6ab;letter-spacing:-0.102px;white-space:nowrap;">Zeitplan bearbeiten</div><div style="position:absolute;left:1902px;top:65px;width:1px;height:1079px;background:#fff"></div><div style="position:absolute;left:0px;top:1142px;width:1904px;height:1px;background:#fff"></div><div style="position:absolute;left:0px;top:0px;width:1904px;height:1px;background:#000"></div><div style="position:absolute;left:0px;top:0px;width:1px;height:1144px;background:#000"></div><div style="position:absolute;left:1903px;top:0px;width:1px;height:1144px;background:#000"></div><div style="position:absolute;left:0px;top:1143px;width:1904px;height:1px;background:#000"></div>
</body></html>
